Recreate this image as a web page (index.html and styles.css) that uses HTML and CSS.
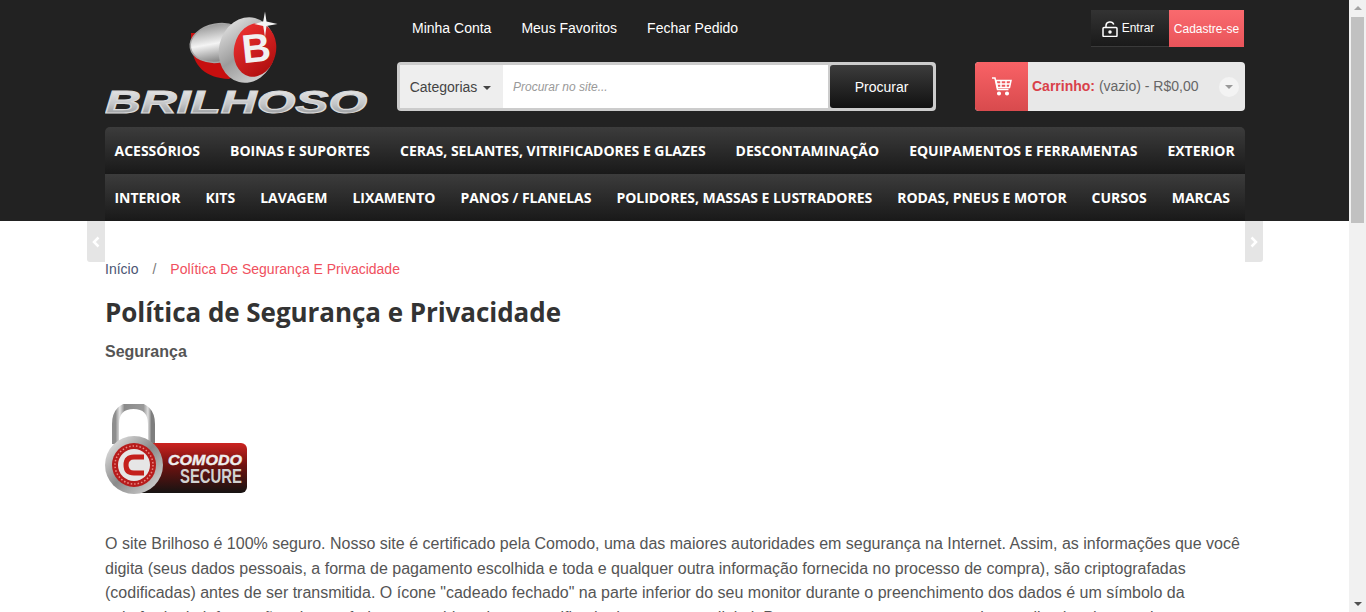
FILE: index.html
```html
<!DOCTYPE html>
<html lang="pt-BR">
<head>
<meta charset="utf-8">
<title>Política de Segurança e Privacidade</title>
<link rel="stylesheet" href="styles.css">
</head>
<body>
<div class="page">
  <header class="header">
    <div class="wrap">
      <div class="top">
        <a class="logo" href="#">
          <svg width="264" height="116" viewBox="0 0 264 116">
            <defs>
              <linearGradient id="silver" x1="0" y1="0" x2="0" y2="1">
                <stop offset="0" stop-color="#9a9a9a"/><stop offset=".5" stop-color="#f4f4f4"/><stop offset="1" stop-color="#808080"/>
              </linearGradient>
              <linearGradient id="ring" x1="0" y1="0" x2="1" y2="1">
                <stop offset="0" stop-color="#f0f0f0"/><stop offset=".5" stop-color="#9c9c9c"/><stop offset="1" stop-color="#e2e2e2"/>
              </linearGradient>
              <linearGradient id="redg" x1="0" y1="0" x2="1" y2="1">
                <stop offset="0" stop-color="#f23434"/><stop offset="1" stop-color="#a80a0a"/>
              </linearGradient>
              <linearGradient id="word" x1="0" y1="0" x2="0" y2="1">
                <stop offset="0" stop-color="#f2f2f2"/><stop offset=".55" stop-color="#c4c6c8"/><stop offset="1" stop-color="#85888b"/>
              </linearGradient>
            </defs>
            <path d="M86 41c2 22 14 34 38 35l16-10V30H86z" fill="#c70f0f"/>
            <ellipse cx="113" cy="40" rx="28" ry="19" transform="rotate(-10 113 40)" fill="url(#silver)" stroke="#a5a5a5" stroke-width="1.500"/>
            <ellipse cx="142" cy="47" rx="28" ry="33" transform="rotate(14 142 47)" fill="url(#ring)"/>
            <ellipse cx="150" cy="47" rx="21" ry="27" transform="rotate(12 150 47)" fill="url(#redg)"/>
            <text class="logo-b" x="137" y="59" transform="rotate(-6 150 47)">B</text>
            <path d="M160 8.500l1.500 10 11 2.500-11 2-1.500 11-1.800-11-9-2 9-2.500z" fill="#f4f4f4"/>
            <text class="logo-word" x="0" y="110" textLength="262" lengthAdjust="spacingAndGlyphs" fill="url(#word)">BRILHOSO</text>
          </svg>
        </a>
        <div class="center">
          <nav class="links">
            <a href="#">Minha Conta</a>
            <a href="#">Meus Favoritos</a>
            <a href="#">Fechar Pedido</a>
          </nav>
          <form class="search">
            <button class="cat" type="button">Categorias<span class="caret"></span></button>
            <input class="query" type="text" placeholder="Procurar no site...">
            <button class="go" type="button">Procurar</button>
          </form>
        </div>
        <div class="right">
          <div class="auth">
            <a class="login" href="#">
              <svg width="16" height="16" viewBox="0 0 16 16" fill="none" stroke="#fff" stroke-width="1.500">
                <rect x="1" y="6.500" width="14" height="9" rx="1"/>
                <path d="M4 6.500V4.500a4 3.700 0 0 1 7.800-1"/>
                <circle cx="8" cy="11" r="1" fill="#fff"/>
              </svg>
              Entrar
            </a>
            <a class="signup" href="#">Cadastre-se</a>
          </div>
          <div class="cart">
            <span class="cart-icon">
              <svg width="20" height="19" viewBox="0 0 20 19" fill="none" stroke="#fff" stroke-width="1.500">
                <path d="M0 1h3l2.500 11.500h11"/>
                <path d="M4 3.500h15l-1.500 7H5.500z"/>
                <path d="M4.700 7h13.600M9 3.500v7M14 3.500v7"/>
                <circle cx="7" cy="16.500" r="1.300" fill="#fff"/>
                <circle cx="15" cy="16.500" r="1.300" fill="#fff"/>
              </svg>
            </span>
            <span class="cart-text"><b>Carrinho:</b> (vazio) - R$0,00</span>
            <span class="cart-toggle"><span class="caret"></span></span>
          </div>
        </div>
      </div>
      <nav class="menu">
        <ul class="row row-a">
          <li>Acessórios</li><li>Boinas e Suportes</li><li>Ceras, Selantes, Vitrificadores e Glazes</li><li>Descontaminação</li><li>Equipamentos e Ferramentas</li><li>Exterior</li>
        </ul>
        <ul class="row row-b">
          <li>Interior</li><li>Kits</li><li>Lavagem</li><li>Lixamento</li><li>Panos / Flanelas</li><li>Polidores, Massas e Lustradores</li><li>Rodas, Pneus e Motor</li><li>Cursos</li><li>Marcas</li>
        </ul>
      </nav>
    </div>
  </header>
  <main class="wrap content">
    <span class="pager pager-l"><svg width="8" height="12" viewBox="0 0 8 12" fill="none" stroke="#fff" stroke-width="2.500"><path d="M6.500 1.500 2 6l4.500 4.500"/></svg></span>
    <span class="pager pager-r"><svg width="8" height="12" viewBox="0 0 8 12" fill="none" stroke="#fff" stroke-width="2.500"><path d="M1.500 1.500 6 6l-4.500 4.500"/></svg></span>
    <div class="crumbs"><a href="#">Início</a><span class="sep">/</span><span class="here">Política De Segurança E Privacidade</span></div>
    <h1>Política de Segurança e Privacidade</h1>
    <h2>Segurança</h2>
    <svg class="seal" width="142" height="90" viewBox="0 0 142 90">
      <defs>
        <linearGradient id="plate" x1="0" y1="0" x2="0" y2="1">
          <stop offset="0" stop-color="#cc2320"/><stop offset=".45" stop-color="#6e1210"/><stop offset="1" stop-color="#161312"/>
        </linearGradient>
        <linearGradient id="steel" x1="0" y1="0" x2="1" y2="1">
          <stop offset="0" stop-color="#f4f4f4"/><stop offset=".5" stop-color="#8a8a8a"/><stop offset="1" stop-color="#e0e0e0"/>
        </linearGradient>
        <linearGradient id="shackle" x1="0" y1="0" x2="1" y2="0">
          <stop offset="0" stop-color="#8e8e8e"/><stop offset=".12" stop-color="#e6e6e6"/><stop offset=".25" stop-color="#8a8a8a"/><stop offset=".78" stop-color="#9a9a9a"/><stop offset=".9" stop-color="#e0e0e0"/><stop offset="1" stop-color="#7e7e7e"/>
        </linearGradient>
      </defs>
      <path d="M10.500 40V20C10.500 8 17 1.500 28.500 1.500S46.500 8 46.500 20v20" fill="none" stroke="url(#shackle)" stroke-width="7"/>
      <rect x="32" y="39" width="110" height="50" rx="6" fill="url(#plate)"/>
      <circle cx="29" cy="61" r="29" fill="url(#steel)"/>
      <circle cx="29" cy="61" r="22" fill="#b71c1c"/>
      <circle cx="29" cy="61" r="19" fill="none" stroke="#e98a86" stroke-width="1.500" stroke-dasharray="1.500 2"/>
      <circle cx="29" cy="61" r="16" fill="#e6e6e6"/>
      <path d="M39 53H29q-8 0-8 8t8 8h10" fill="none" stroke="#c4201c" stroke-width="5"/>
      <text class="seal-a" x="63" y="61" textLength="74" lengthAdjust="spacingAndGlyphs">COMODO</text>
      <text class="seal-b" x="75" y="79" textLength="62" lengthAdjust="spacingAndGlyphs">SECURE</text>
    </svg>
    <p class="body-text">O site Brilhoso é 100% seguro. Nosso site é certificado pela Comodo, uma das maiores autoridades em segurança na Internet. Assim, as informações que você digita (seus dados pessoais, a forma de pagamento escolhida e toda e qualquer outra informação fornecida no processo de compra), são criptografadas (codificadas) antes de ser transmitida. O ícone "cadeado fechado" na parte inferior do seu monitor durante o preenchimento dos dados é um símbolo da existência da informação criptografada e protegida pelo seu certificado de segurança digital. Para que seus pagamentos sejam realizados de maneira segura,</p>
  </main>
</div>
<aside class="scrollbar">
  <span class="arrow-up"></span>
  <span class="thumb"></span>
  <span class="arrow-down"></span>
</aside>
</body>
</html>
```
FILE: styles.css
```css
* { box-sizing: border-box; }
html, body { margin: 0; height: 612px; overflow: hidden; }
body { display: flex; background: #fff; font-family: "Liberation Sans", Arial, sans-serif; color: #555; }
a { color: inherit; text-decoration: none; }
.page { width: 1349px; flex: none; }
.wrap { width: 1140px; margin-left: 105px; }
.header { background: #222; height: 221px; }
.header .wrap { display: flex; flex-direction: column; height: 221px; }
.top { height: 127px; display: flex; }
.logo { width: 292px; display: block; flex: none; }
.logo svg { display: block; margin-top: 3px; }
.logo-word { font: italic 700 32px "Liberation Sans", sans-serif; stroke: #d8d8d8; stroke-width: 1.100px; }
.logo-b { font: 700 40px "Liberation Sans", sans-serif; fill: #f1f1f1; }
.center { width: 539px; flex: none; }
.links { display: flex; gap: 30px; padding: 20px 0 0 15px; height: 62px; font-size: 14px; line-height: 16px; color: #fff; }
.search { display: flex; height: 49px; border: 3px solid #ccc; border-radius: 4px; background: #ccc; }
.cat { width: 103px; flex: none; border: 0; background: #eee; color: #444; font: 14px "Liberation Sans", sans-serif; padding: 0 2px 0 0; }
.cat .caret { margin-left: 6px; }
.caret { display: inline-block; width: 0; height: 0; border: 4px solid transparent; border-top-color: currentColor; border-bottom: 0; vertical-align: middle; }
.query { width: 325px; flex: none; border: 0; background: #fff; padding: 0 10px; font: italic 12px "Liberation Sans", sans-serif; outline: 0; }
.query::placeholder { color: #999; }
.go { width: 103px; flex: none; margin-left: 2px; border: 0; border-radius: 3px; color: #fff; font: 14px "Liberation Sans", sans-serif; background: linear-gradient(#3c3c3c, #111); padding: 0; }
.right { margin-left: 39px; width: 270px; flex: none; }
.auth { display: flex; justify-content: flex-end; height: 37px; margin: 10px 1px 15px 0; font-size: 12px; color: #fff; }
.login { width: 78px; display: flex; align-items: center; justify-content: center; gap: 4px; padding-right: 4px; background: linear-gradient(#333, #1a1a1a); border-bottom: 1px solid #3a3a3a; }
.login svg { margin-top: 2px; }
.signup { width: 75px; display: flex; align-items: center; justify-content: center; background: linear-gradient(#f96a6e, #e9545a); }
.cart { display: flex; align-items: center; height: 49px; border-radius: 4px; background: #e8e8e8; font-size: 14px; color: #666; }
.cart-icon { width: 53px; height: 49px; display: flex; align-items: center; justify-content: center; border-radius: 4px 0 0 4px; background: linear-gradient(#f96266, #d84a4d); }
.cart-text { margin: 0 0 2px 4px; flex: 1; }
.cart-text b { color: #d9414a; }
.cart-toggle { width: 20px; height: 20px; margin-right: 6px; border-radius: 50%; background: #f3f3f3; color: #999; display: flex; align-items: center; justify-content: center; }
.menu { flex: 1; }
.row { list-style: none; margin: 0; padding: 0 0 0 9.500px; height: 47px; display: flex; align-items: center; background: linear-gradient(#3c3c3c, #191919); color: #fff; font: 700 14px "Open Sans", sans-serif; text-transform: uppercase; white-space: nowrap; }
.row-a { gap: 30px; letter-spacing: -.015px; border-radius: 5px 5px 0 0; }
.row-b { gap: 25px; letter-spacing: -.03px; }
.content { position: relative; padding-top: 40px; }
.pager { position: absolute; top: 0; width: 18px; height: 41px; background: #e5e5e5; display: flex; align-items: center; justify-content: center; }
.pager-l { left: -18px; border-radius: 0 0 0 3px; }
.pager-r { right: -18px; border-radius: 0 0 3px 0; }
.crumbs { font-size: 14px; line-height: 16px; color: #4b5573; }
.sep { margin: 0 14px; color: #777; }
.here { color: #f0505e; }
h1 { margin: 17px 0 0; font: 700 26px/36px "Open Sans", sans-serif; letter-spacing: -.05px; color: #333; }
h2 { margin: 13px 0 0; font: 700 16px/18px "Liberation Sans", sans-serif; color: #555; }
.seal { display: block; margin-top: 43px; }
.seal-a { font: italic 700 15px "Liberation Sans", sans-serif; fill: #eee; stroke: #eee; stroke-width: .4px; }
.seal-b { font: 700 21px "Liberation Sans", sans-serif; fill: #d2d2d2; }
.body-text { margin: 38px 0 0; font-size: 16px; line-height: 24.500px; color: #555; }
.scrollbar { width: 17px; height: 612px; flex: none; position: relative; background: #f1f1f1; }
.thumb { position: absolute; left: 2px; top: 17px; width: 13px; height: 206px; background: #c1c1c1; }
.arrow-up, .arrow-down { position: absolute; left: 5px; width: 0; height: 0; border: 4px solid transparent; }
.arrow-up { top: 6px; border-top: 0; border-bottom-color: #a3a3a3; }
.arrow-down { bottom: 6px; border-bottom: 0; border-top-color: #505050; }
```
